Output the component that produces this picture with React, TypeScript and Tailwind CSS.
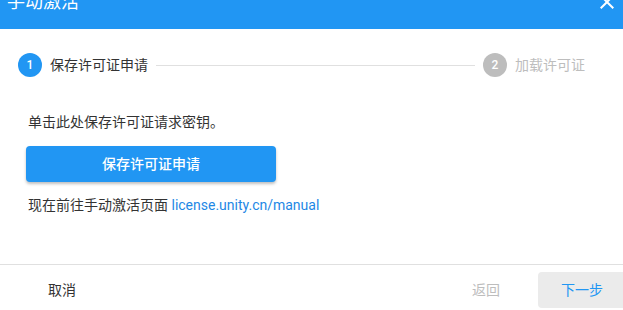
import React from "react";

const font = { fontFamily: 'Roboto, "Noto Sans CJK SC", sans-serif' };

function StepCircle({ n, active }: { n: number; active?: boolean }) {
  return (
    <div
      className={`flex h-6 w-6 shrink-0 items-center justify-center rounded-full text-[12px] font-medium text-white ${
        active ? "bg-[#2196F3]" : "bg-[#bdbdbd]"
      }`}
    >
      {n}
    </div>
  );
}

export default function App() {
  return (
    <div className="h-[310px] w-[623px] overflow-hidden bg-white" style={font}>
      {/* Title bar */}
      <div className="flex h-[29px] items-start justify-between bg-[#2196F3]">
        <div className="-mt-[7px] pl-[7px] text-[18px] leading-[18px] text-white">手动激活</div>
        <svg viewBox="0 0 24 24" className="-mt-[10px] mr-[4px] h-6 w-6 fill-white">
          <path d="M19 6.41L17.59 5 12 10.59 6.41 5 5 6.41 10.59 12 5 17.59 6.41 19 12 13.41 17.59 19 19 17.59 13.41 12z" />
        </svg>
      </div>

      {/* Stepper */}
      <div className="mt-[24px] flex items-center pl-[18px] pr-[38px]">
        <StepCircle n={1} active />
        <span className="ml-2 text-[14px] leading-5 text-[#333]">保存许可证申请</span>
        <div className="mx-2 h-px flex-1 bg-[#e0e0e0]" />
        <StepCircle n={2} />
        <span className="ml-2 text-[14px] leading-5 text-[#bdbdbd]">加载许可证</span>
      </div>

      {/* Body */}
      <div className="mt-[35px] pl-[28px]">
        <p className="text-[14px] leading-5 text-[#333]">单击此处保存许可证请求密钥。</p>
        <button className="-ml-[2px] mt-[14px] h-9 w-[250px] rounded bg-[#2196F3] text-[14px] font-medium text-white shadow-[0_2px_3px_rgba(0,0,0,0.25)]">
          保存许可证申请
        </button>
        <p className="mt-[13px] text-[14px] leading-5 text-[#333]">
          现在前往手动激活页面 <span className="text-[#1e88e5]">license.unity.cn/manual</span>
        </p>
      </div>

      {/* Footer */}
      <div className="mt-[49px] flex items-start border-t border-[#e0e0e0] pt-[7px] pl-[30px]">
        <button className="h-9 w-16 text-[14px] text-[#333]">取消</button>
        <div className="flex-1" />
        <button className="h-9 w-16 text-[14px] text-[#bdbdbd]">返回</button>
        <button className="-mr-[3px] ml-5 h-9 w-[88px] rounded bg-[#ebebeb] text-[14px] text-[#2196F3]">下一步</button>
      </div>
    </div>
  );
}
